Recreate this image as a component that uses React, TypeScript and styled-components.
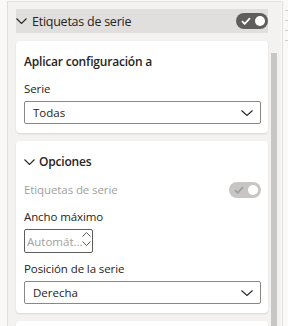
import styled, { createGlobalStyle } from "styled-components";

const GlobalStyle = createGlobalStyle`
    html, body {
        margin: 0;
        padding: 0;
        background: #faf9f8;
        font-family: "Open Sans", "Noto Sans", sans-serif;
        color: #252423;
    }
`;

const Frame = styled.div`
    display: flex;
    width: 288px;
    height: 326px;
    overflow: hidden;
    padding-top: 1px;
    padding-left: 7px;
    box-sizing: border-box;
`;

const Pane = styled.div`
    flex: 1;
    display: flex;
    background: #f3f2f1;
    border-left: 1px solid #e1dfdd;
    border-top: 1px solid #e1dfdd;
    padding: 7px 0 0 8px;
`;

const Content = styled.div`
    width: 252px;
    display: flex;
    flex-direction: column;
    gap: 8px;
`;

const Scrollbar = styled.div`
    width: 6px;
    margin-left: 3px;
    padding-top: 44px;
    display: flex;
    flex-direction: column;
`;

const Thumb = styled.div`
    flex: 1;
    background: #c8c6c4;
`;

const RightRail = styled.div`
    width: 5px;
    margin-left: 1px;
    background: #faf9f8;
    border-left: 1px solid #e1dfdd;
    display: flex;
    flex-direction: column;
    gap: 9px;
    padding-top: 9px;
`;

const Tick = styled.div`
    height: 1px;
    width: 3px;
    margin-left: 2px;
    background: #d2d0ce;
`;

const SectionHeader = styled.div`
    height: 24px;
    flex-shrink: 0;
    background: #e1dfdd;
    display: flex;
    align-items: center;
    justify-content: space-between;
`;

const HeaderTitle = styled.div`
    display: flex;
    align-items: center;
    gap: 5px;
    font-size: 12.5px;
    letter-spacing: -0.25px;
    color: #252423;
`;

const Card = styled.div<{ $height: number }>`
    background: #ffffff;
    border-radius: 4px;
    box-shadow: 0 1px 2px rgba(0, 0, 0, 0.12);
    height: ${(p) => p.$height}px;
    flex-shrink: 0;
    padding: 0 7px 0 8px;
    box-sizing: border-box;
    display: flex;
    flex-direction: column;
`;

const CardTitle = styled.div<{ $top: number }>`
    margin-top: ${(p) => p.$top}px;
    font-size: 12px;
    font-weight: 600;
    letter-spacing: -0.2px;
    line-height: 18px;
    display: flex;
    align-items: center;
    gap: 4px;
`;

const Label = styled.div<{ $top: number; $disabled?: boolean }>`
    margin-top: ${(p) => p.$top}px;
    font-size: 11.5px;
    letter-spacing: -0.1px;
    line-height: 16px;
    color: ${(p) => (p.$disabled ? "#a19f9d" : "#252423")};
`;

const ToggleRow = styled.div`
    margin-top: 11px;
    display: flex;
    align-items: center;
    justify-content: space-between;
    height: 16px;
`;

const Toggle = styled.div<{ $disabled?: boolean }>`
    width: 32px;
    height: 16px;
    border-radius: 8px;
    background: ${(p) => (p.$disabled ? "#c8c6c4" : "#605e5c")};
    display: flex;
    align-items: center;
    justify-content: space-between;
    padding: 0 3px 0 5px;
    box-sizing: border-box;
`;

const Knob = styled.div`
    width: 10px;
    height: 10px;
    border-radius: 50%;
    background: #ffffff;
`;

const Select = styled.div`
    margin-top: 4px;
    height: 23px;
    border: 1px solid #8a8886;
    border-radius: 2px;
    box-sizing: border-box;
    display: flex;
    align-items: center;
    justify-content: space-between;
    padding: 0 7px 0 8px;
    font-size: 11.5px;
    color: #252423;
`;

const NumberBox = styled.div`
    margin-top: 4px;
    width: 69px;
    height: 24px;
    border: 1px solid #605e5c;
    border-radius: 2px;
    box-sizing: border-box;
    display: flex;
    align-items: center;
    padding-left: 2px;
    position: relative;
    font-size: 11.5px;
    color: #a19f9d;
`;

const Spinner = styled.div`
    position: absolute;
    right: 1px;
    top: 2px;
    display: flex;
    flex-direction: column;
    gap: 4px;
`;

const Chevron = ({ w = 11, h = 6, color = "#252423" }: { w?: number; h?: number; color?: string }) => (
    <svg width={w} height={h} viewBox={`0 0 ${w} ${h}`} fill="none">
        <path d={`M0.5 0.5 L${w / 2} ${h - 0.5} L${w - 0.5} 0.5`} stroke={color} strokeWidth="1.1" />
    </svg>
);

const Check = ({ color }: { color: string }) => (
    <svg width="10" height="8" viewBox="0 0 10 8" fill="none">
        <path d="M1 4.2 L3.7 6.8 L9 1.2" stroke={color} strokeWidth="1.8" />
    </svg>
);

export default function App() {
    return (
        <>
            <GlobalStyle />
            <Frame>
                <Pane>
                    <Content>
                        <SectionHeader>
                            <HeaderTitle>
                                <Chevron w={11} h={6} />
                                Etiquetas de serie
                            </HeaderTitle>
                            <Toggle>
                                <Check color="#ffffff" />
                                <Knob />
                            </Toggle>
                        </SectionHeader>

                        <Card $height={92}>
                            <CardTitle $top={12}>Aplicar configuración a</CardTitle>
                            <Label $top={10}>Serie</Label>
                            <Select>
                                Todas
                                <Chevron w={12} h={6} />
                            </Select>
                        </Card>

                        <Card $height={172}>
                            <CardTitle $top={12}>
                                <Chevron w={11} h={6} />
                                Opciones
                            </CardTitle>
                            <ToggleRow>
                                <Label $top={0} $disabled>Etiquetas de serie</Label>
                                <Toggle $disabled>
                                    <Check color="#a19f9d" />
                                    <Knob />
                                </Toggle>
                            </ToggleRow>
                            <Label $top={11}>Ancho máximo</Label>
                            <NumberBox>
                                Automát...
                                <Spinner>
                                    <svg width="9" height="5" viewBox="0 0 9 5" fill="none">
                                        <path d="M0.5 4.5 L4.5 0.5 L8.5 4.5" stroke="#605e5c" strokeWidth="1" />
                                    </svg>
                                    <svg width="9" height="5" viewBox="0 0 9 5" fill="none">
                                        <path d="M0.5 0.5 L4.5 4.5 L8.5 0.5" stroke="#605e5c" strokeWidth="1" />
                                    </svg>
                                </Spinner>
                            </NumberBox>
                            <Label $top={8}>Posición de la serie</Label>
                            <Select>
                                Derecha
                                <Chevron w={12} h={6} />
                            </Select>
                        </Card>

                        <Card $height={40} />
                    </Content>
                    <Scrollbar>
                        <Thumb />
                    </Scrollbar>
                </Pane>
                <RightRail>
                    <Tick />
                    <Tick />
                    <Tick />
                    <Tick />
                </RightRail>
            </Frame>
        </>
    );
}
